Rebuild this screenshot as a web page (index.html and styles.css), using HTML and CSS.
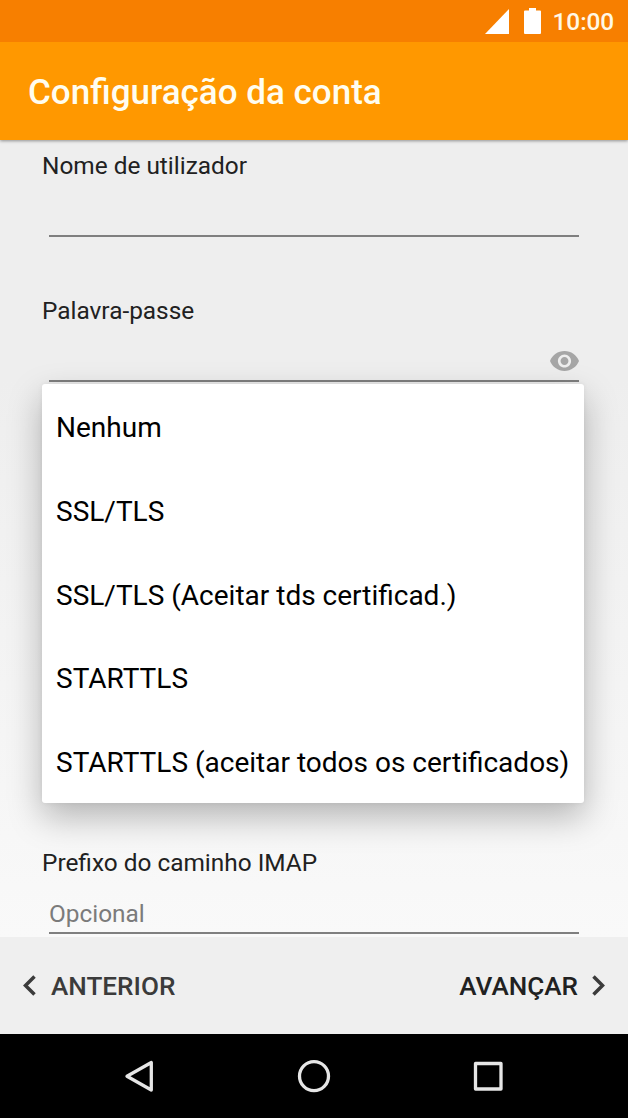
FILE: index.html
```html
<!DOCTYPE html>
<html lang="pt">
<head>
<meta charset="utf-8">
<title>Configuração da conta</title>
<link rel="stylesheet" href="styles.css">
</head>
<body>
<div class="screen">
  <div class="status-bar">
    <svg class="signal" width="24" height="25" viewBox="0 0 24 25"><path d="M24 0V25H0Z" fill="#fff"/></svg>
    <svg class="battery" width="17" height="26" viewBox="0 0 17 26"><path d="M5 0H12V2.500H16Q17 2.500 17 3.500V25Q17 26 16 26H1Q0 26 0 25V3.500Q0 2.500 1 2.500H5Z" fill="#fff"/></svg>
    <span class="clock">10:00</span>
  </div>
  <header class="app-bar"><h1 class="title">Configuração da conta</h1></header>
  <main class="content">
    <section class="field">
      <div class="label">Nome de utilizador</div>
      <div class="input"></div>
    </section>
    <section class="field">
      <div class="label">Palavra-passe</div>
      <div class="input">
        <svg class="eye" width="29" height="20" viewBox="1 4.500 22 15"><path fill="#a6a6a6" d="M12 4.500C7 4.500 2.730 7.610 1 12c1.730 4.390 6 7.500 11 7.500s9.270-3.110 11-7.500c-1.730-4.390-6-7.500-11-7.500zM12 17c-2.760 0-5-2.240-5-5s2.240-5 5-5 5 2.240 5 5-2.240 5-5 5zm0-8c-1.660 0-3 1.340-3 3s1.340 3 3 3 3-1.340 3-3-1.340-3-3-3z"/></svg>
      </div>
    </section>
    <section class="field prefix">
      <div class="label">Prefixo do caminho IMAP</div>
      <div class="input"><span class="hint">Opcional</span></div>
    </section>
    <ul class="menu">
      <li class="option">Nenhum</li>
      <li class="option">SSL/TLS</li>
      <li class="option">SSL/TLS (Aceitar tds certificad.)</li>
      <li class="option">STARTTLS</li>
      <li class="option">STARTTLS (aceitar todos os certificados)</li>
    </ul>
  </main>
  <footer class="wizard-bar">
    <div class="step previous">
      <svg width="13" height="21" viewBox="0 0 13 21"><path d="M11.500 1.500L2.500 10.500L11.500 19.500" fill="none" stroke="#3b3b3b" stroke-width="3.500"/></svg>
      <span>ANTERIOR</span>
    </div>
    <div class="step next">
      <span>AVANÇAR</span>
      <svg width="13" height="21" viewBox="0 0 13 21"><path d="M1.500 1.500L10.500 10.500L1.500 19.500" fill="none" stroke="#3b3b3b" stroke-width="3.500"/></svg>
    </div>
  </footer>
  <nav class="nav-bar">
    <svg width="34" height="34" viewBox="0 0 34 34"><path d="M28.300 3.500V31L4 17.200Z"/></svg>
    <svg width="34" height="34" viewBox="0 0 34 34"><circle cx="17" cy="17.200" r="14.500"/></svg>
    <svg width="34" height="34" viewBox="0 0 34 34"><rect x="4.500" y="4.500" width="25.500" height="25.500"/></svg>
  </nav>
</div>
</body>
</html>
```
FILE: styles.css
```css
* { box-sizing: border-box; }
body { margin: 0; font-family: Roboto, "Noto Sans", sans-serif; }
.screen {
  display: flex;
  flex-direction: column;
  width: 628px;
  height: 1118px;
  overflow: hidden;
}
.status-bar {
  flex: 0 0 42px;
  display: flex;
  align-items: center;
  justify-content: flex-end;
  padding-right: 14px;
  background: #f77f00;
  z-index: 3;
}
.battery { margin-left: 15px; }
.clock {
  margin-left: 12px;
  padding-top: 2px;
  font-size: 24.4px;
  font-weight: 500;
  line-height: 28px;
  letter-spacing: -0.1px;
  color: #fff8e6;
}
.app-bar {
  flex: 0 0 97.500px;
  display: flex;
  align-items: center;
  padding: 4px 28px 0;
  background: #ff9800;
  box-shadow: 0 1px 3px rgba(0, 0, 0, .4);
  z-index: 2;
}
.title {
  margin: 0;
  font-size: 35px;
  font-weight: 500;
  line-height: 42px;
  color: #fffdf0;
}
.content {
  position: relative;
  flex: 0 0 797.500px;
  padding: 12.500px 42px 0;
  background: linear-gradient(#eee 0, #eee 30%, #f9f9f9 100%);
}
.field { height: 145px; }
.label {
  font-size: 24.4px;
  line-height: 28px;
  color: #212121;
}
.input {
  display: flex;
  align-items: center;
  justify-content: flex-end;
  height: 57px;
  margin: 0 7px;
  padding-top: 17px;
  border-bottom: 2px solid #7f7f7f;
}
.prefix { margin-top: 407px; height: 88px; }
.prefix .input { justify-content: flex-start; padding-top: 18px; }
.hint {
  font-size: 24.4px;
  line-height: 28px;
  color: #7b7b7b;
}
.menu {
  position: absolute;
  top: 244.500px;
  left: 42px;
  width: 542px;
  height: 419px;
  margin: 0;
  padding: 2px 14px 0;
  list-style: none;
  background: #fff;
  border-radius: 3px;
  box-shadow: 0 14px 34px rgba(0, 0, 0, .27), 0 0 5px rgba(0, 0, 0, .06);
}
.option {
  height: 83.8px;
  font-size: 28px;
  line-height: 83.8px;
  white-space: nowrap;
  color: #000;
}
.wizard-bar {
  flex: 0 0 97px;
  display: flex;
  align-items: center;
  justify-content: space-between;
  padding: 0 23px;
  background: #efefef;
  z-index: 1;
}
.step {
  display: flex;
  align-items: center;
  gap: 15px;
  font-size: 26.1px;
  font-weight: 500;
  line-height: 30px;
  color: #212121;
}
.previous { color: #3b3b3b; }
.next { gap: 14px; }
.nav-bar {
  flex: 0 0 84px;
  display: flex;
  align-items: center;
  justify-content: center;
  gap: 140px;
  background: #000;
}
.nav-bar path, .nav-bar circle, .nav-bar rect {
  fill: none;
  stroke: #e6e6e6;
  stroke-width: 3.3;
  stroke-linejoin: round;
}
```
